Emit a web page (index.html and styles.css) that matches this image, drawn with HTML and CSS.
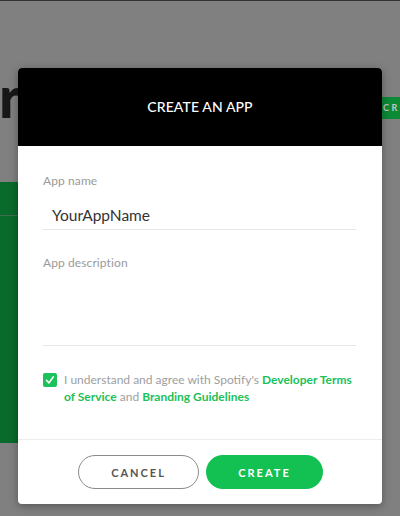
FILE: index.html
```html
<!DOCTYPE html>
<html>
<head>
<meta charset="utf-8">
<link rel="stylesheet" href="styles.css">
</head>
<body>
<div class="page">
  <div class="topline"></div>
  <div class="page-head">
    <span class="big-r">r</span>
    <span class="bg-btn">CREATE AN APP</span>
  </div>
  <div class="bg-panel">
    <div class="bg-panel-head"></div>
  </div>
</div>

<div class="modal">
  <div class="modal-head">CREATE AN APP</div>
  <div class="modal-body">
    <div class="label">App name</div>
    <div class="input">YourAppName</div>
    <div class="label label-desc">App description</div>
    <div class="textarea"></div>
    <div class="agree">
      <span class="check">
        <svg width="10" height="10" viewBox="0 0 10 10"><path d="M1.6 5.4 L4 7.9 L8.4 1.8" fill="none" stroke="#fff" stroke-width="1.6" stroke-linecap="round" stroke-linejoin="round"/></svg>
      </span>
      <p class="agree-text">I understand and agree with Spotify's <span class="link">Developer Terms of Service</span> and <span class="link">Branding Guidelines</span></p>
    </div>
  </div>
  <div class="modal-foot">
    <span class="btn btn-cancel">CANCEL</span>
    <span class="btn btn-create">CREATE</span>
  </div>
</div>
</body>
</html>
```

FILE: styles.css
```css
html, body {
  margin: 0;
  padding: 0;
}
body {
  width: 400px;
  height: 516px;
  overflow: hidden;
  background: #808080;
  font-family: Lato, "Noto Sans", sans-serif;
  position: relative;
}
.page {
  width: 400px;
}
.topline {
  height: 1px;
  background: #333;
}
.page-head {
  margin-top: 80px;
  height: 44px;
  display: flex;
  justify-content: space-between;
  align-items: center;
}
.big-r {
  font-size: 58px;
  font-weight: 900;
  color: #171717;
  line-height: 44px;
  margin-left: -1px;
  margin-top: -14px;
}
.bg-btn {
  align-self: flex-start;
  margin-top: 16px;
  width: 40px;
  height: 22px;
  background: #0c8a36;
  color: #c4c4c4;
  font-size: 9px;
  font-weight: 700;
  letter-spacing: 2.6px;
  line-height: 22px;
  padding-left: 23px;
  white-space: nowrap;
  overflow: hidden;
  margin-right: -23px;
}
.bg-panel {
  margin-top: 57px;
  width: 200px;
  height: 261px;
  background: #0a6a2c;
}
.bg-panel-head {
  height: 33px;
  border-bottom: 1px solid #3f6e4e;
}

.modal {
  position: absolute;
  left: 18px;
  top: 68px;
  width: 364px;
  height: 436px;
  background: #fff;
  border-radius: 4px;
  box-shadow: 0 2px 8px rgba(0,0,0,0.35);
  display: flex;
  flex-direction: column;
  overflow: hidden;
}
.modal-head {
  height: 78px;
  background: #000;
  color: #fff;
  font-size: 14px;
  font-weight: 500;
  display: flex;
  align-items: center;
  justify-content: center;
  letter-spacing: 0.1px;
  padding-bottom: 2px;
  box-sizing: border-box;
}
.modal-body {
  padding: 27px 26px 0 25px;
  height: 294px;
  box-sizing: border-box;
  border-bottom: 1px solid #ececec;
}
.label {
  font-size: 12px;
  line-height: 16px;
  color: #9a9a9a;
  letter-spacing: 0.1px;
}
.input {
  margin-top: 8px;
  height: 33px;
  padding-top: 7px;
  padding-left: 9px;
  font-size: 15.5px;
  line-height: 22px;
  color: #333;
  border-bottom: 1px solid #e6e6e6;
  box-sizing: border-box;
}
.label-desc {
  margin-top: 25px;
}
.textarea {
  height: 74px;
  border-bottom: 1px solid #e6e6e6;
}
.agree {
  display: flex;
  gap: 7px;
  margin-top: 25px;
}
.check {
  width: 14px;
  height: 14px;
  flex: none;
  background: #1cc159;
  border-radius: 2px;
  margin-top: 2px;
  display: flex;
  align-items: center;
  justify-content: center;
}
.agree-text {
  margin: 0;
  font-size: 12px;
  line-height: 17px;
  color: #9e9e9e;
}
.link {
  color: #1cc159;
  font-weight: 700;
}
.modal-foot {
  flex: 1;
  display: flex;
  align-items: center;
  justify-content: center;
  gap: 7px;
  padding-left: 1px;
}
.btn {
  height: 34px;
  border-radius: 17px;
  box-sizing: border-box;
  display: flex;
  align-items: center;
  justify-content: center;
  font-size: 11px;
  font-weight: 700;
  letter-spacing: 2px;
}
.btn-cancel {
  width: 121px;
  border: 1.5px solid #8a8a8a;
  color: #555;
}
.btn-create {
  width: 117px;
  background: #13c153;
  color: #fff;
}
```
